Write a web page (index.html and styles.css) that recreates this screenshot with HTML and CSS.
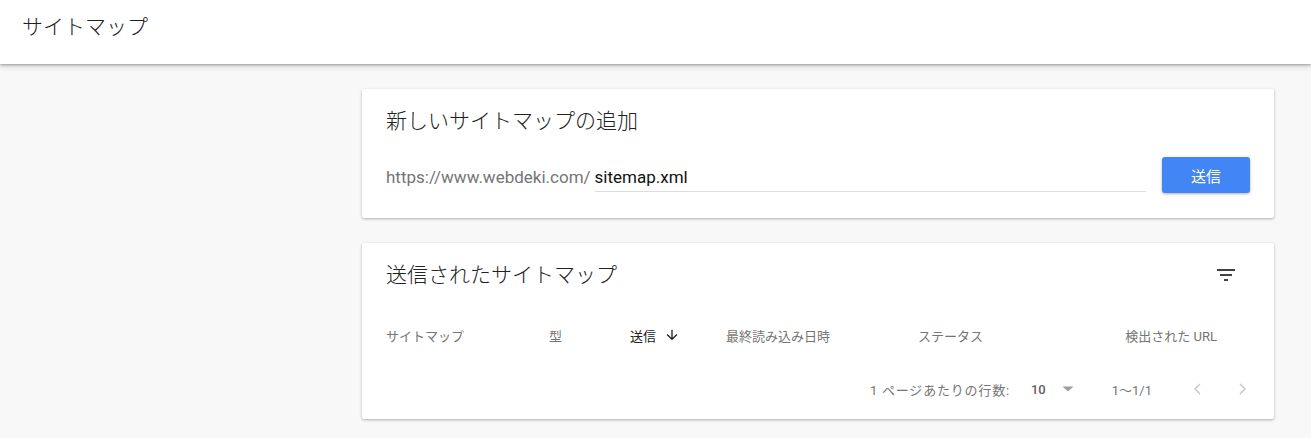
FILE: index.html
```html
<!DOCTYPE html>
<html lang="ja">
<head>
<meta charset="utf-8">
<title>サイトマップ</title>
<link rel="stylesheet" href="styles.css">
</head>
<body>
<header class="topbar">
  <h1 class="topbar-title">サイトマップ</h1>
</header>
<main class="content">
  <section class="card card-add">
    <h2 class="card-title">新しいサイトマップの追加</h2>
    <div class="add-row">
      <span class="prefix">https://www.webdeki.com/</span>
      <div class="field"><span class="field-value">sitemap.xml</span></div>
      <button class="btn-submit">送信</button>
    </div>
  </section>
  <section class="card card-list">
    <div class="list-head">
      <h2 class="card-title">送信されたサイトマップ</h2>
      <span class="filter-btn">
        <svg width="24" height="24" viewBox="0 0 24 24"><path d="M10 18h4v-2h-4v2zM3 6v2h18V6H3zm3 7h12v-2H6v2z" fill="#424242"/></svg>
      </span>
    </div>
    <div class="table-head">
      <span class="col">サイトマップ</span>
      <span class="col">型</span>
      <span class="col col-active">送信<svg class="sort-icon" width="16" height="16" viewBox="0 0 24 24"><path d="M20 12l-1.41-1.41L13 16.17V4h-2v12.17l-5.58-5.59L4 12l8 8 8-8z" fill="#212121"/></svg></span>
      <span class="col">最終読み込み日時</span>
      <span class="col">ステータス</span>
      <span class="col col-right">検出された URL</span>
    </div>
    <div class="pager">
      <span class="pager-label">1 ページあたりの行数:</span>
      <span class="pager-size">10</span>
      <svg class="pager-drop" width="12" height="6" viewBox="0 0 12 6"><path d="M0.5 0.5h11L6 5.5z" fill="#9e9e9e"/></svg>
      <span class="pager-range">1〜1/1</span>
      <svg class="pager-prev" width="12" height="12" viewBox="0 0 12 12"><polyline points="8,1 3,6 8,11" fill="none" stroke="#c4c4c4" stroke-width="1.3"/></svg>
      <svg class="pager-next" width="12" height="12" viewBox="0 0 12 12"><polyline points="4,1 9,6 4,11" fill="none" stroke="#c4c4c4" stroke-width="1.3"/></svg>
    </div>
  </section>
</main>
</body>
</html>
```
FILE: styles.css
```css
html, body {
  margin: 0;
  padding: 0;
}
body {
  background: #f8f8f8;
  font-family: Roboto, "Noto Sans CJK JP", sans-serif;
  color: #212121;
  height: 438px;
  overflow: hidden;
}
.topbar {
  height: 64px;
  background: #fff;
  box-shadow: 0 1px 2px rgba(0,0,0,0.25), 0 2px 6px rgba(0,0,0,0.2);
  display: flex;
  align-items: center;
  padding-left: 22px;
  position: relative;
  z-index: 1;
}
.topbar-title {
  margin: 0;
  margin-top: -10px;
  font-size: 21px;
  font-weight: 300;
  color: #212121;
  line-height: 28px;
}
.content {
  margin-left: 362px;
  width: 912px;
  padding-top: 25px;
  display: flex;
  flex-direction: column;
  gap: 25px;
}
.card {
  background: #fff;
  box-shadow: 0 1px 3px rgba(0,0,0,0.3);
  border-radius: 2px;
  padding: 0 24px;
}
.card-title {
  margin: 0;
  font-size: 21px;
  font-weight: 300;
  line-height: 28px;
  color: #212121;
}
.card-add {
  padding-top: 18px;
  padding-bottom: 25px;
}
.add-row {
  margin-top: 22px;
  display: flex;
  align-items: center;
  height: 36px;
}
.prefix {
  font-size: 17px;
  color: #757575;
  line-height: 20px;
  margin-top: 4px;
}
.field {
  flex: 1;
  margin-left: 4px;
  border-bottom: 1px solid #dcdcdc;
  height: 26px;
  margin-top: 6px;
  display: flex;
  align-items: flex-start;
}
.field-value {
  font-size: 17px;
  line-height: 20px;
  color: #111;
  margin-top: 2px;
}
.btn-submit {
  margin-left: 16px;
  width: 88px;
  height: 36px;
  border: 0;
  border-radius: 3px;
  background: #4285f4;
  color: #fff;
  font-family: Roboto, "Noto Sans CJK JP", sans-serif;
  font-size: 15px;
  box-shadow: 0 1px 3px rgba(0,0,0,0.3);
  padding: 0;
}
.card-list {
  padding-top: 16px;
  padding-bottom: 10px;
}
.list-head {
  display: flex;
  align-items: center;
  justify-content: space-between;
  height: 32px;
}
.filter-btn {
  width: 24px;
  height: 24px;
  margin-right: 12px;
  display: flex;
}
.table-head {
  margin-top: 24px;
  height: 40px;
  display: grid;
  grid-template-columns: 163px 81px 96px 192px 1fr auto;
  align-items: center;
  padding-right: 33px;
  font-size: 13px;
  color: #757575;
}
.col {
  display: flex;
  align-items: center;
}
.col-active {
  color: #212121;
}
.sort-icon {
  margin-left: 8px;
}
.col-right {
  justify-content: flex-end;
}
.pager {
  margin-top: 14px;
  height: 40px;
  display: flex;
  align-items: center;
  justify-content: flex-end;
  padding-right: 2px;
  font-size: 13px;
  color: #757575;
}
.pager-label {
  letter-spacing: 0.8px;
}
.pager-size {
  margin-left: 21px;
  color: #616161;
  font-weight: 500;
}
.pager-drop {
  margin-left: 16px;
}
.pager-range {
  margin-left: 38px;
}
.pager-prev {
  margin-left: 40px;
}
.pager-next {
  margin-left: 32px;
}
```
